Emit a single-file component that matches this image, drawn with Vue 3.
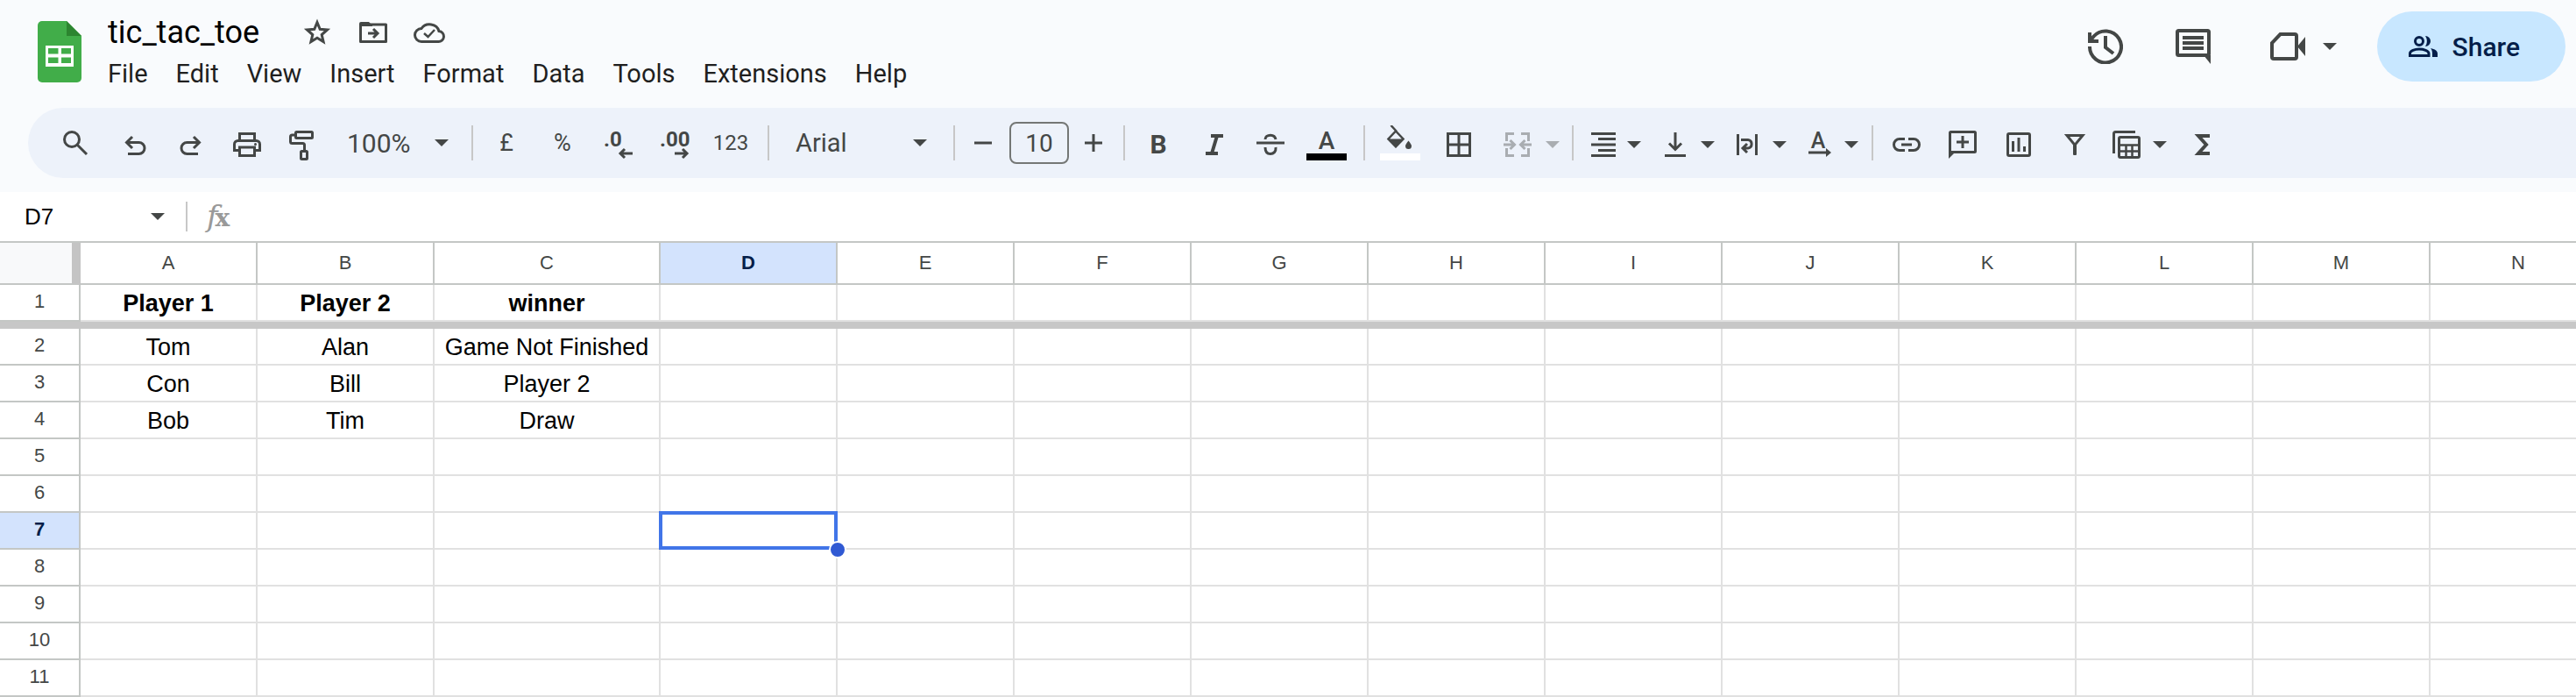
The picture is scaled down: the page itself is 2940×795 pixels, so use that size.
<script setup>
import { ref } from 'vue'

const title = ref('tic_tac_toe')
const zoomLevel = ref('100%')
const fontName = ref('Arial')
const fontSize = ref('10')
const cellName = ref('D7')
const formula = ref('')

const menus = ['File', 'Edit', 'View', 'Insert', 'Format', 'Data', 'Tools', 'Extensions', 'Help']
const columns = 'ABCDEFGHIJKLMN'.split('')
const rows = Array.from({ length: 11 }, (_, i) => i + 1)
const cells = {
  A1: 'Player 1', B1: 'Player 2', C1: 'winner',
  A2: 'Tom', B2: 'Alan', C2: 'Game Not Finished',
  A3: 'Con', B3: 'Bill', C3: 'Player 2',
  A4: 'Bob', B4: 'Tim', C4: 'Draw'
}
const selected = { col: 'D', row: 7 }
const isSelected = (col, row) => col === selected.col && row === selected.row
</script>

<template>
  <div class="app">
    <header class="header">
      <a class="logo" href="#" aria-label="Sheets home">
        <svg width="50" height="70" viewBox="0 0 50 70">
          <path d="M5 0H33L50 17V65a5 5 0 0 1-5 5H5a5 5 0 0 1-5-5V5a5 5 0 0 1 5-5Z" fill="#41ad49" />
          <path d="M33 0L50 17H33Z" fill="#2c8530" />
          <path d="M9 28H41V52H9ZM12 31V37.500H23.500V31ZM27 31V37.500H38V31ZM12 41.500V48H23.500V41.500ZM27 41.500V48H38V41.500Z" fill="#fff" fill-rule="evenodd" />
        </svg>
      </a>

      <div class="doc">
        <div class="title-row">
          <input v-model="title" class="title" aria-label="Document name" />
          <button class="mini" aria-label="Star">
            <svg width="40" height="40" viewBox="0 0 40 40"><path d="M20 8.500L23.200 16.300 31.500 17 25.200 22.500 27.100 30.600 20 26.300 12.900 30.600 14.800 22.500 8.500 17 16.800 16.300Z" class="line" /></svg>
          </button>
          <button class="mini" aria-label="Move">
            <svg width="40" height="40" viewBox="0 0 40 40">
              <path d="M5.500 11H34.500V30.500H5.500Z" class="line" stroke-linejoin="round" />
              <path d="M4 10a2 2 0 0 1 2-2H15L19 12V13H4Z" class="solid" />
              <path d="M14 21H24M20 16L25 21 20 26" class="line" />
            </svg>
          </button>
          <button class="mini" aria-label="Saved to Drive">
            <svg width="40" height="40" viewBox="0 0 40 40">
              <path d="M11 30.500H30a6 6 0 0 0 1-12A11 10 0 0 0 11 15.500A7.500 7.500 0 0 0 11 30.500Z" class="line" />
              <path d="M14 21L18.500 25 26 17" class="line thin" />
            </svg>
          </button>
        </div>
        <nav class="menus" aria-label="Menu bar">
          <button v-for="m in menus" :key="m" class="menu">{{ m }}</button>
        </nav>
      </div>

      <div class="actions">
        <button class="round" aria-label="Version history">
          <svg width="40" height="40" viewBox="0 0 40 40">
            <path d="M2 20A18 18 0 1 0 6.500 8.500L3 13" class="line bold" />
            <path d="M2 4V14H12" class="line bold" />
            <path d="M20 8V21L29 28" class="line bold" />
          </svg>
        </button>
        <button class="round" aria-label="Comments">
          <svg width="40" height="40" viewBox="0 0 40 40">
            <rect x="2" y="2" width="36" height="28" rx="1.500" class="line bold" />
            <path d="M32 30H40V40Z" class="solid" />
            <path d="M8 10H32M8 16H32M8 22H32" class="line bold" />
          </svg>
        </button>
        <button class="meet" aria-label="Join a call">
          <svg width="40" height="40" viewBox="0 0 40 40">
            <path d="M11.500 6H28a2 2 0 0 1 2 2V32a2 2 0 0 1-2 2H4a2 2 0 0 1-2-2V16Z" class="line bold" />
            <path d="M31 20L40 9V31Z" class="solid" />
          </svg>
          <svg width="16" height="8" viewBox="0 0 16 8"><path d="M0 0H16L8 8Z" class="solid" /></svg>
        </button>
        <button class="share">
          <svg width="34" height="24" viewBox="0 0 34 24">
            <circle cx="12" cy="6" r="4.500" fill="none" stroke="#041e49" stroke-width="3" />
            <path d="M1.500 22.500V20C1.500 17 7 15 12 15S23 17 23 20V22.500Z" fill="none" stroke="#041e49" stroke-width="3" />
            <path d="M19 0A6 6 0 1 1 19 12C21.500 8.500 21.500 3.500 19 0Z" fill="#041e49" />
            <path d="M25 14C30 15 33 17 33 20V24H27V20C27 17.500 26.500 15.500 25 14Z" fill="#041e49" />
          </svg>
          Share
        </button>
      </div>
    </header>

    <div class="toolbar" role="toolbar" aria-label="Main">
      <button class="tool w64" aria-label="Search the menus">
        <svg width="40" height="40" viewBox="0 0 40 40"><circle cx="16" cy="16" r="8.500" class="line" /><path d="M22 22L33 33" class="line" /></svg>
      </button>
      <button class="tool" aria-label="Undo">
        <svg width="40" height="40" viewBox="0 0 40 40"><path d="M17 13L10.500 19.500 17 26M10.500 19.500H24.500a6.500 6.500 0 0 1 0 13H12" class="line" /></svg>
      </button>
      <button class="tool" aria-label="Redo">
        <svg width="40" height="40" viewBox="0 0 40 40"><path d="M23 13L29.500 19.500 23 26M29.500 19.500H15.500a6.500 6.500 0 0 0 0 13H28" class="line" /></svg>
      </button>
      <button class="tool" aria-label="Print">
        <svg width="40" height="40" viewBox="0 0 40 40">
          <path d="M11.500 17V9.500H28.500V17M11 28.500H5.500V21.500a4 4 0 0 1 4-4H30.500a4 4 0 0 1 4 4V28.500H29" class="line" />
          <rect x="11.500" y="25" width="17" height="9.500" class="line" /><circle cx="29.500" cy="21.500" r="1.500" class="solid" />
        </svg>
      </button>
      <button class="tool" aria-label="Paint format">
        <svg width="40" height="40" viewBox="0 0 40 40">
          <rect x="11.500" y="7.500" width="19" height="7" rx="1" class="line" />
          <path d="M11 11H7.500a2 2 0 0 0-2 2V18.500a2 2 0 0 0 2 2H19.500a2 2 0 0 1 2 2V28" class="line" />
          <rect x="17.500" y="29.500" width="7" height="9" rx="1" class="line" />
        </svg>
      </button>
      <label class="pick zoom">
        <select v-model="zoomLevel" aria-label="Zoom"><option>100%</option></select>
        <svg width="16" height="8" viewBox="0 0 16 8"><path d="M0 0H16L8 8Z" class="solid" /></svg>
      </label>
      <span class="sep"></span>

      <button class="tool symbol" aria-label="Format as currency">£</button>
      <button class="tool symbol" aria-label="Format as per cent">%</button>
      <button class="tool" aria-label="Decrease decimal places">
        <svg width="40" height="40" viewBox="0 0 40 40"><text x="3" y="24" class="glyph digits">.0</text><path d="M36 32H22M27 27L22 32 27 37" class="line" /></svg>
      </button>
      <button class="tool" aria-label="Increase decimal places">
        <svg width="40" height="40" viewBox="0 0 40 40"><text x="3" y="24" class="glyph digits">.00</text><path d="M20 32H34M29 27L34 32 29 37" class="line" /></svg>
      </button>
      <button class="tool formats" aria-label="More formats">123</button>
      <span class="sep"></span>

      <label class="pick font">
        <select v-model="fontName" aria-label="Font"><option>Arial</option></select>
        <svg width="16" height="8" viewBox="0 0 16 8"><path d="M0 0H16L8 8Z" class="solid" /></svg>
      </label>
      <span class="sep"></span>

      <button class="tool w44" aria-label="Decrease font size">
        <svg width="40" height="40" viewBox="0 0 40 40"><path d="M10 20H30" class="line" /></svg>
      </button>
      <input v-model="fontSize" class="size" aria-label="Font size" />
      <button class="tool w40" aria-label="Increase font size">
        <svg width="40" height="40" viewBox="0 0 40 40"><path d="M10 20H30M20 10V30" class="line" /></svg>
      </button>
      <span class="sep"></span>

      <button class="tool" aria-label="Bold">
        <svg width="40" height="40" viewBox="0 0 40 40"><text x="20" y="32" class="glyph strong">B</text></svg>
      </button>
      <button class="tool" aria-label="Italic">
        <svg width="40" height="40" viewBox="0 0 40 40"><path d="M16 12H30M10 32H24M23 12L17 32" class="line bold" /></svg>
      </button>
      <button class="tool" aria-label="Strikethrough">
        <svg width="40" height="40" viewBox="0 0 40 40"><path d="M4 20H36M14 16C14 13 16.500 11.200 20 11.200S25.500 13 26 16M14 25C14 30 16.500 32.500 20 32.500S26.500 30 26 25" class="line" /></svg>
      </button>
      <button class="tool" aria-label="Text colour">
        <svg width="48" height="40" viewBox="0 0 48 40"><text x="24" y="27" class="glyph letter">A</text><rect x="1" y="32" width="46" height="8" fill="#000" /></svg>
      </button>
      <span class="sep"></span>

      <button class="tool w60" aria-label="Fill colour">
        <svg width="48" height="40" viewBox="0 0 48 40">
          <path d="M13.500 0L20 7M19 6.500L27.500 15.500 19 24 10.500 15.500Z" class="line thin" />
          <path d="M9 15.500H29L19 26Z" class="solid" />
          <path d="M33.500 17.500C35.500 20 37 22 37 23.500a3.500 3.500 0 0 1-7 0C30 22 31.500 20 33.500 17.500Z" class="solid" />
          <rect x="1" y="32" width="46" height="8" fill="#fff" />
        </svg>
      </button>
      <button class="tool" aria-label="Borders">
        <svg width="40" height="40" viewBox="0 0 40 40"><path d="M8.500 9.500H33.500V34.500H8.500ZM21 9V35M8 22H34" class="line" /></svg>
      </button>
      <span class="split">
        <button class="tool w64" aria-label="Merge cells" disabled>
          <svg width="40" height="40" viewBox="0 0 40 40"><path d="M16 9.500H7.500V18M7.500 26V34.500H16M24 9.500H32.500V18M32.500 26V34.500H24M4 22H16M11.500 17L16.500 22 11.500 27M36 22H24M28.500 17L23.500 22 28.500 27" class="line" /></svg>
        </button>
        <button class="caret w16" aria-label="Merge type" disabled><svg width="16" height="8" viewBox="0 0 16 8"><path d="M0 0H16L8 8Z" class="solid" /></svg></button>
      </span>
      <span class="sep"></span>

      <span class="split">
        <button class="tool w48" aria-label="Horizontal align">
          <svg width="40" height="40" viewBox="0 0 40 40"><path d="M6 9.500H34M14 15.500H34M6 22H34M14 28.500H34M6 34.500H34" class="line" /></svg>
        </button>
        <button class="caret w22" aria-label="Horizontal align options"><svg width="16" height="8" viewBox="0 0 16 8"><path d="M0 0H16L8 8Z" class="solid" /></svg></button>
      </span>
      <span class="split">
        <button class="tool" aria-label="Vertical align">
          <svg width="40" height="40" viewBox="0 0 40 40"><path d="M20 8V28M13 20.500L20 27.500 27 20.500M8 34.500H32" class="line" /></svg>
        </button>
        <button class="caret" aria-label="Vertical align options"><svg width="16" height="8" viewBox="0 0 16 8"><path d="M0 0H16L8 8Z" class="solid" /></svg></button>
      </span>
      <span class="split">
        <button class="tool" aria-label="Text wrapping">
          <svg width="40" height="40" viewBox="0 0 40 40"><path d="M9.500 10V34M30.500 10V34M13 16.500H21a4.800 4.800 0 0 1 0 9.500H15.500M20 21L15 26 20 31" class="line" /></svg>
        </button>
        <button class="caret" aria-label="Text wrapping options"><svg width="16" height="8" viewBox="0 0 16 8"><path d="M0 0H16L8 8Z" class="solid" /></svg></button>
      </span>
      <span class="split">
        <button class="tool" aria-label="Text rotation">
          <svg width="40" height="40" viewBox="0 0 40 40"><text x="19" y="26" class="glyph slim">A</text><path d="M8 31H30" class="line" /><path d="M28 26L34 31 28 36Z" class="solid" /></svg>
        </button>
        <button class="caret" aria-label="Text rotation options"><svg width="16" height="8" viewBox="0 0 16 8"><path d="M0 0H16L8 8Z" class="solid" /></svg></button>
      </span>
      <span class="sep"></span>

      <button class="tool" aria-label="Insert link">
        <svg width="40" height="40" viewBox="0 0 40 40"><path d="M18 15.500H12a6.500 6.500 0 0 0 0 13H18M22 15.500H28a6.500 6.500 0 0 1 0 13H22M14 22H26" class="line" /></svg>
      </button>
      <button class="tool" aria-label="Insert comment">
        <svg width="40" height="40" viewBox="0 0 40 40"><rect x="5.500" y="7.500" width="29" height="23" rx="1" class="line" /><path d="M4 30H12L4 38Z" class="solid" /><path d="M13 19H27M20 12V26" class="line" /></svg>
      </button>
      <button class="tool" aria-label="Insert chart">
        <svg width="40" height="40" viewBox="0 0 40 40"><rect x="7.500" y="9.500" width="25" height="25" rx="1.500" class="line" /><path d="M13.500 18V30M20 14V30M26.500 24V30" class="line" /></svg>
      </button>
      <button class="tool" aria-label="Create a filter">
        <svg width="40" height="40" viewBox="0 0 40 40"><path d="M11 11.500H29L20 22.500Z" class="line" /><path d="M18 22H22V33a1 1 0 0 1-1 1H19a1 1 0 0 1-1-1Z" class="solid" /></svg>
      </button>
      <span class="split">
        <button class="tool w48" aria-label="Filter views">
          <svg width="40" height="40" viewBox="0 0 40 40"><path d="M4.500 32V9.500a2 2 0 0 1 2-2H29" class="line" /><rect x="10.500" y="13.500" width="23" height="23" rx="1.500" class="line" /><path d="M10 22.500H34M10 29.500H34M18.500 23V37M25.500 23V37" class="line thin" /></svg>
        </button>
        <button class="caret w26" aria-label="Filter view options"><svg width="16" height="8" viewBox="0 0 16 8"><path d="M0 0H16L8 8Z" class="solid" /></svg></button>
      </span>
      <button class="tool" aria-label="Functions">
        <svg width="40" height="40" viewBox="0 0 40 40"><path d="M28 12H15L24 22 15 32H28" class="line bold" /></svg>
      </button>
    </div>

    <div class="formula-bar">
      <input v-model="cellName" class="name" aria-label="Name box" />
      <button class="caret name-caret" aria-label="Named ranges"><svg width="16" height="8" viewBox="0 0 16 8"><path d="M0 0H16L8 8Z" class="solid" /></svg></button>
      <span class="divider"></span>
      <label class="fx" for="formula"><i>f</i><b>x</b></label>
      <input id="formula" v-model="formula" class="formula" />
    </div>

    <div class="sheet">
      <table class="grid">
        <colgroup>
          <col class="col-head" />
          <col v-for="c in columns" :key="c" :class="c === 'C' ? 'col-wide' : 'col'" />
        </colgroup>
        <thead>
          <tr>
            <td class="corner"></td>
            <th v-for="c in columns" :key="c" scope="col" :class="{ active: c === selected.col }">{{ c }}</th>
          </tr>
        </thead>
        <tbody>
          <template v-for="r in rows" :key="r">
            <tr :class="{ heading: r === 1 }">
              <th scope="row" :class="{ active: r === selected.row }">{{ r }}</th>
              <td v-for="c in columns" :key="c" :class="{ current: isSelected(c, r) }">{{ cells[c + r] }}<span v-if="isSelected(c, r)" class="handle"></span></td>
            </tr>
            <tr v-if="r === 1" class="freeze" aria-hidden="true"><td :colspan="columns.length + 1"></td></tr>
          </template>
        </tbody>
      </table>
    </div>
  </div>
</template>

<style>
body {
  background: #fff;
}
</style>

<style scoped>
.app {
  font-family: Roboto, "Liberation Sans", sans-serif;
  color: #1f1f1f;
  background: #f9fbfd;
  overflow: hidden;
}
button,
input,
select {
  font: inherit;
  color: inherit;
  background: none;
  border: 0;
  margin: 0;
  padding: 0;
  appearance: none;
}
svg {
  display: block;
  flex: none;
}
.line {
  fill: none;
  stroke: #444746;
  stroke-width: 3px;
}
.line.thin {
  stroke-width: 2.5px;
}
.line.bold {
  stroke-width: 4px;
}
.solid {
  fill: #444746;
}
.glyph {
  fill: #444746;
  font-weight: 500;
}
.digits {
  font-size: 24px;
  font-weight: 700;
}
.strong {
  font-size: 30px;
  font-weight: 700;
  text-anchor: middle;
}
.letter {
  font-size: 28px;
  text-anchor: middle;
}
.slim {
  font-size: 25px;
  text-anchor: middle;
}

.header {
  display: flex;
  align-items: flex-start;
  padding: 13px 12px 0 43px;
  height: 110px;
}
.logo {
  margin-top: 11px;
}
.doc {
  margin-left: 16px;
}
.title-row {
  display: flex;
  align-items: center;
  gap: 8px;
  height: 48px;
}
.title {
  box-sizing: border-box;
  width: 217px;
  padding-left: 14px;
  font-size: 36px;
  line-height: 44px;
  color: #000;
}
.mini {
  display: flex;
  justify-content: center;
  width: 56px;
}
.menus {
  display: flex;
  gap: 4px;
}
.menu {
  padding: 0 14px;
  font-size: 29px;
  line-height: 46px;
}
.actions {
  display: flex;
  align-items: center;
  gap: 20px;
  margin-left: auto;
}
.round {
  display: flex;
  align-items: center;
  justify-content: center;
  width: 80px;
  height: 80px;
}
.meet {
  display: flex;
  align-items: center;
  gap: 20px;
  height: 80px;
  padding: 0 26px 0 28px;
}
.share {
  display: flex;
  align-items: center;
  gap: 16px;
  height: 80px;
  padding: 0 52px 0 36px;
  border-radius: 40px;
  background: #c8e7ff;
  color: #041e49;
  font-size: 30px;
  font-weight: 500;
}

.toolbar {
  display: flex;
  align-items: center;
  gap: 8px;
  height: 80px;
  margin-left: 32px;
  padding-left: 22px;
  border-radius: 40px 0 0 40px;
  background: #edf2fa;
  color: #444746;
}
.tool {
  display: flex;
  align-items: center;
  justify-content: center;
  flex: none;
  width: 56px;
  height: 60px;
}
.tool.w40 { width: 40px; }
.tool.w44 { width: 44px; }
.tool.w48 { width: 48px; }
.tool.w60 { width: 60px; }
.tool.w64 { width: 64px; }
.symbol {
  font-size: 27px;
}
.formats {
  font-size: 24px;
}
.split {
  display: flex;
  flex: none;
}
.caret {
  display: flex;
  align-items: center;
  justify-content: center;
  flex: none;
  width: 18px;
  padding-top: 4px;
}
.caret.w16 { width: 16px; }
.caret.w22 { width: 22px; }
.caret.w26 { width: 26px; }
button:disabled {
  opacity: 0.4;
}
.sep {
  flex: none;
  width: 2px;
  height: 40px;
  margin: 0 2px 0 6px;
  background: #c7c7c7;
}
.pick {
  display: grid;
  flex: none;
  align-items: center;
}
.pick select,
.pick svg {
  grid-area: 1 / 1;
}
.pick svg {
  justify-self: end;
  pointer-events: none;
}
.zoom {
  width: 142px;
  font-size: 30px;
}
.zoom select {
  padding-left: 14px;
}
.zoom svg {
  margin-right: 12px;
}
.font {
  width: 186px;
  font-size: 29px;
}
.font select {
  padding-left: 20px;
}
.font svg {
  margin-right: 16px;
}
.size {
  box-sizing: border-box;
  flex: none;
  width: 68px;
  height: 48px;
  border: 2px solid #747775;
  border-radius: 8px;
  font-size: 28px;
  text-align: center;
}

.formula-bar {
  display: flex;
  align-items: center;
  height: 56px;
  margin-top: 16px;
  background: #fff;
  border-bottom: 2px solid #c4c7c5;
}
.name {
  box-sizing: border-box;
  width: 171px;
  padding-left: 28px;
  font-family: "Liberation Sans", Arial, sans-serif;
  font-size: 26px;
  color: #000;
}
.name-caret {
  padding-top: 0;
}
.divider {
  width: 2px;
  height: 34px;
  margin: 0 22px 0 23px;
  background: #c7c7c7;
}
.fx {
  display: flex;
  align-items: baseline;
  color: #999;
  line-height: 34px;
}
.fx i {
  font: italic 400 34px/34px "DejaVu Serif", serif;
}
.fx b {
  margin-left: -3px;
  font: 700 28px/34px "DejaVu Serif", serif;
}
.formula {
  flex: 1;
  font-size: 26px;
}

.sheet {
  overflow: hidden;
  background: #fff;
}
.grid {
  width: 2976px;
  table-layout: fixed;
  border-collapse: separate;
  border-spacing: 0;
  font-family: "Liberation Sans", Arial, sans-serif;
}
.col-head { width: 92px; }
.col { width: 202px; }
.col-wide { width: 258px; }
.grid th,
.grid td {
  padding: 0;
  border-right: 2px solid #e1e1e1;
  border-bottom: 2px solid #e1e1e1;
  text-align: center;
}
.grid th {
  border-color: #c4c7c5;
  color: #444746;
  font-size: 22px;
  font-weight: 400;
}
.grid thead th {
  height: 46px;
}
.grid tbody th {
  height: 38px;
  padding-bottom: 2px;
}
.grid tbody td {
  padding: 6px 0 4px;
  font-size: 27px;
  line-height: 30px;
  white-space: nowrap;
  color: #000;
}
.grid .heading td {
  font-weight: 700;
}
.grid th.active {
  background: #d3e3fd;
  color: #041e49;
  font-weight: 700;
}
.grid .corner {
  background: #f8f9fa;
  border-right: 10px solid #c4c4c4;
  border-bottom-color: #c4c7c5;
}
.grid .freeze td {
  height: 8px;
  padding: 0;
  border: 0;
  line-height: 0;
  background: #c7c7c7;
}
.current {
  position: relative;
}
.current::after {
  content: "";
  position: absolute;
  inset: -2px;
  border: 4px solid #4175e8;
}
.handle {
  position: absolute;
  z-index: 1;
  right: -12px;
  bottom: -12px;
  width: 16px;
  height: 16px;
  border: 2px solid #fff;
  border-radius: 50%;
  background: #3059d3;
}
</style>
